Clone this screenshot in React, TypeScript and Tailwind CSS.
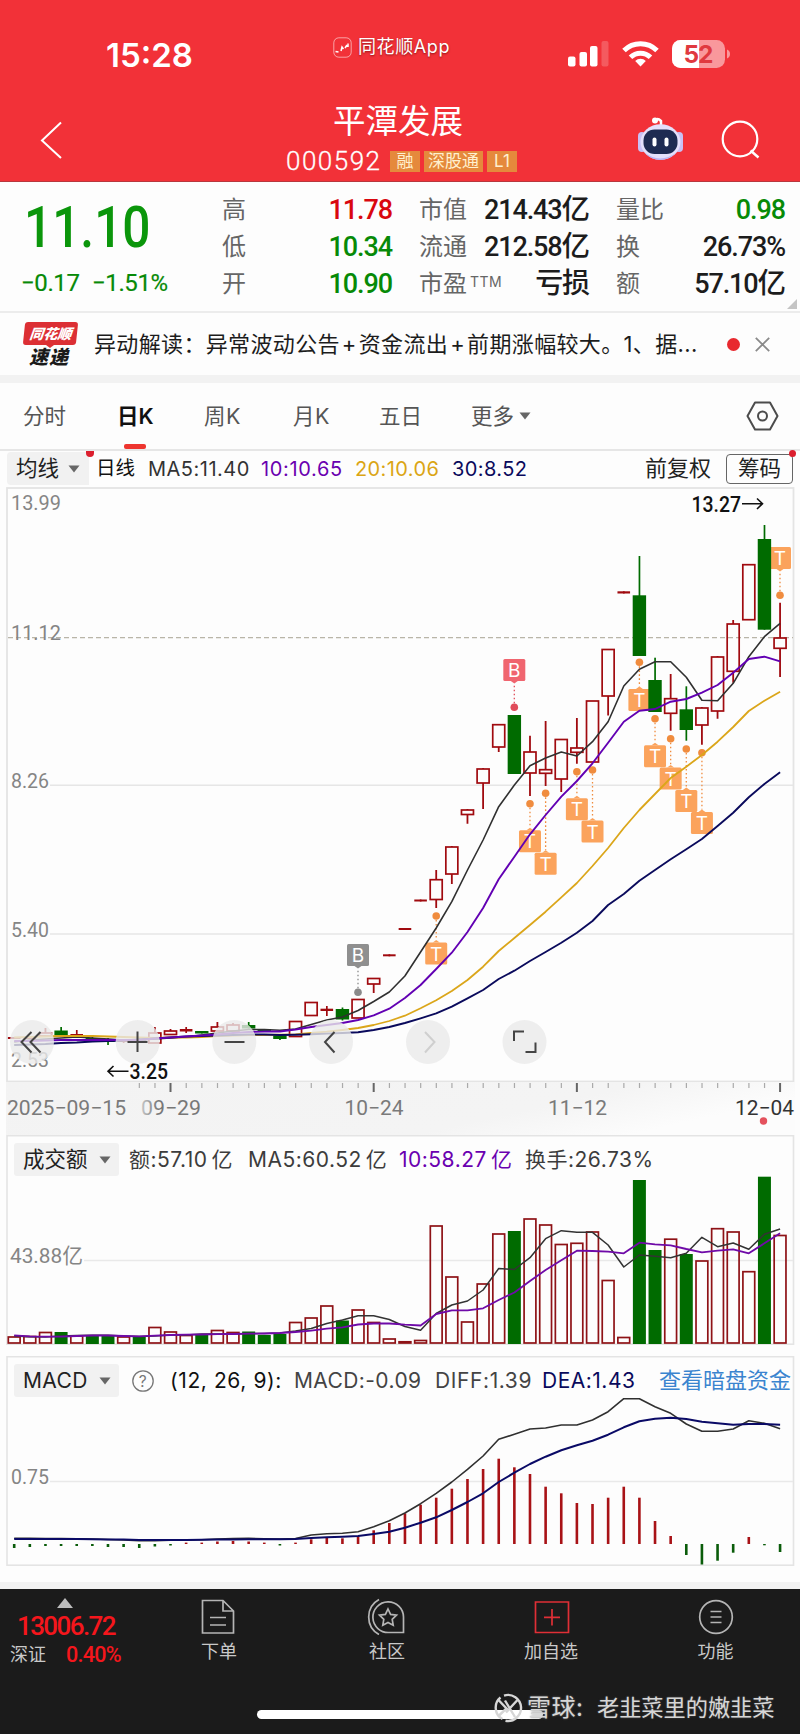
import React from 'react';

const UP = '#a00a0f';
const DOWN = '#006b00';

const colX = (i: number) => 14.2 + 15.63 * i;

type Candle = [number, number, number, number, 'r' | 'g' | 's'];

// high, body top, body bottom, low, kind (r hollow, g falling, s solid red)
const candles: Candle[] = [
  [1037, 1037, 1039, 1039, 's'], [1037, 1037, 1039, 1039, 's'], [1028, 1033, 1036, 1037, 'r'], [1027, 1030.5, 1035.5, 1036, 'g'],
  [1030, 1034, 1036, 1038, 's'], [1037, 1038, 1040, 1042, 'g'], [1038, 1040, 1042, 1045, 'g'], [1039, 1040, 1042, 1043, 's'],
  [1038, 1040, 1043, 1043, 'g'], [1027, 1033, 1043, 1043, 'r'], [1029, 1031, 1034.5, 1034.5, 'r'], [1027, 1029, 1031.5, 1033, 's'],
  [1031, 1031, 1033.5, 1033.5, 'g'], [1022, 1027, 1031, 1031, 'r'], [1023, 1025, 1031, 1031, 'r'], [1022, 1025, 1028.5, 1028.5, 'g'],
  [1029, 1029, 1031.5, 1031.5, 'g'], [1035, 1035, 1039, 1040, 'g'], [1021, 1021.5, 1036.5, 1037, 'r'], [1002, 1002.5, 1015.5, 1016, 'r'],
  [1006, 1008.7, 1011, 1016, 's'], [1007.5, 1009, 1019.5, 1020.5, 'g'], [999, 999.5, 1018, 1018, 'r'], [978, 978.5, 984, 993, 'r'],
  [954.3, 954.3, 956.3, 956.3, 's'], [928, 928, 930, 930, 's'], [899.5, 899.5, 901.5, 901.5, 's'], [870, 879.7, 899.5, 908, 'r'],
  [846, 847, 874, 884, 'r'], [809, 810, 814.5, 823.7, 'r'], [768, 769, 783, 809, 'r'], [724, 724.7, 747, 752, 'r'],
  [715, 715, 774, 774, 'g'], [735.7, 752, 773, 796, 'r'], [721, 769.7, 773.3, 786, 'r'], [739, 739.5, 779, 792, 'r'],
  [718, 748, 752.3, 763.7, 'r'], [701, 701, 762, 762, 'r'], [649, 649.5, 696, 715.5, 'r'], [591.3, 591.3, 593.5, 593.5, 's'],
  [556, 595.3, 656, 656, 'g'], [657.7, 680, 712, 712, 'g'], [674, 698.7, 713.3, 730.7, 'r'], [686.3, 709.3, 730, 740.7, 'g'],
  [707, 708, 725, 744.7, 'r'], [656, 657, 711, 718.7, 'r'], [620, 624, 671.3, 682.7, 'r'], [564, 564.7, 619.7, 620, 'r'],
  [525, 539, 629.7, 629.7, 'g'], [602.7, 638, 648.3, 677, 'r'],
];

const ma5 = [1042, 1040, 1039, 1038, 1037, 1038, 1039, 1040, 1040, 1039, 1038, 1037, 1035, 1033, 1031, 1029.5, 1029.5, 1030.3, 1029, 1024.5, 1020, 1017, 1010.5, 1001.5, 992, 976, 952, 928, 901.7, 870, 840, 806.7, 785, 765.7, 758, 752, 756, 741.7, 721.7, 686, 669.3, 661.7, 661.7, 677.3, 700.3, 700.7, 683.3, 656.7, 636.7, 623.3];
const ma10 = [1041, 1041, 1040.5, 1040, 1040, 1040, 1040, 1040, 1040, 1038.5, 1037.5, 1036.5, 1035.5, 1034.5, 1033, 1032, 1031.5, 1031.5, 1029.5, 1027, 1025, 1023, 1020, 1015.3, 1008.7, 998, 985, 969, 952.7, 932, 908, 879.3, 856.7, 834.3, 815, 796.7, 781, 763.3, 742.7, 721.7, 710.7, 709, 701.7, 699, 692.7, 685, 672.7, 659, 656.7, 661.3];
const ma20 = [1037.5, 1037, 1036.5, 1036, 1036, 1036, 1036.5, 1037, 1037.5, 1038, 1037.5, 1037.5, 1037, 1036, 1035.5, 1035, 1035, 1034.7, 1034.3, 1033, 1031.7, 1030, 1028, 1025, 1021, 1015.7, 1008.3, 1000.3, 991, 980, 966.7, 951, 938, 925, 911.7, 897.3, 883, 866, 848, 828, 810, 794, 778, 766.7, 755, 741.7, 727, 711, 700.7, 691.7];
const ma30 = [1045, 1044.5, 1044, 1043, 1042.5, 1041.5, 1041, 1040.5, 1039.5, 1038.5, 1037.5, 1036.5, 1036, 1035.5, 1035, 1034.5, 1034.5, 1035, 1034.7, 1034.2, 1033.6, 1033, 1032.2, 1030, 1027, 1023, 1018.3, 1013.3, 1006.7, 998.3, 990, 979, 970.7, 961, 952, 942.7, 932.7, 921, 905, 894, 880.7, 870, 859.3, 849.3, 839, 826, 812.7, 797.3, 784, 772.3];

const volTop = [1337, 1336.5, 1332.5, 1332, 1336, 1336, 1336, 1337, 1337, 1327.5, 1332, 1335.5, 1335, 1330.5, 1332.5, 1331.5, 1335, 1334, 1322.5, 1318, 1306, 1320.5, 1310, 1322.5, 1339, 1341.8, 1340.5, 1226, 1277, 1322, 1284, 1234, 1231, 1219, 1225, 1244.5, 1243.3, 1232, 1280.5, 1337.5, 1180, 1250, 1239.2, 1254, 1261, 1228.7, 1232, 1271.7, 1176.7, 1235.5];
const volDown = [3, 5, 6, 8, 12, 15, 16, 17, 21, 32, 40, 41, 43, 48];
const volMa5 = [1336, 1336.7, 1337, 1336, 1335.5, 1335.3, 1335.3, 1336, 1336.5, 1336, 1335, 1335, 1334, 1334, 1334, 1333.5, 1333.5, 1333, 1331, 1328.5, 1323.5, 1320, 1315.7, 1315.7, 1319.5, 1326.5, 1330.3, 1313.5, 1305, 1301, 1290, 1268.5, 1269.5, 1257.7, 1238.7, 1230.7, 1232.3, 1232.3, 1245, 1267, 1255, 1256.3, 1257.7, 1253.3, 1237.3, 1246.7, 1243, 1249.3, 1234.3, 1229];
const volMa10 = [1335.3, 1336.3, 1336.7, 1336.7, 1336, 1335.5, 1335.5, 1336, 1336.3, 1335.7, 1335, 1334.7, 1334.5, 1334.2, 1334, 1333.7, 1333.5, 1333, 1332, 1330.7, 1328.7, 1327.3, 1324.5, 1323.5, 1323.5, 1324.7, 1325.5, 1314, 1310.3, 1310.3, 1308.3, 1300, 1292.5, 1281, 1270, 1260.3, 1250.7, 1251, 1251.7, 1253.3, 1242.7, 1244.3, 1245.3, 1249, 1252.3, 1250.7, 1249.3, 1253.3, 1243.3, 1233.3];

const macdEnd = [1548, 1547, 1546, 1546, 1546, 1546, 1547, 1547, 1548, 1546.5, 1545.5, 1542.6, 1542.6, 1541.5, 1541, 1541.5, 1542.6, 1545.5, 1542.6, 1539.3, 1537.7, 1538.3, 1536, 1530.3, 1523, 1513.3, 1504.7, 1497.7, 1488.7, 1479, 1469, 1458.7, 1467.3, 1474, 1486.7, 1493.3, 1503, 1504, 1497.7, 1486.7, 1497.7, 1521, 1536, 1555, 1564.5, 1560.7, 1552.7, 1537, 1545.3, 1552];
const diff = [1538.3, 1538.3, 1538.5, 1538.5, 1538.7, 1539, 1539.5, 1540, 1540.7, 1540.7, 1540.3, 1540, 1539.7, 1539, 1538.5, 1538.3, 1538.7, 1539, 1538.5, 1535, 1533.7, 1533.3, 1531.7, 1526.7, 1520.7, 1513, 1503.7, 1493.3, 1482, 1469.3, 1456, 1439.3, 1434.3, 1429, 1428, 1425, 1425, 1420, 1411.7, 1398.7, 1398.7, 1406.7, 1413.3, 1424, 1431.3, 1431.3, 1429, 1420.7, 1423.3, 1428.7];
const dea = [1539, 1539, 1539, 1539, 1539, 1539.2, 1539.4, 1539.6, 1540, 1540, 1540, 1540, 1539.8, 1539.6, 1539.4, 1539.2, 1539.2, 1539.2, 1539, 1538, 1537.3, 1536.7, 1536, 1534, 1531.7, 1527.7, 1522.7, 1517.3, 1510, 1502, 1493.3, 1482, 1472.7, 1464, 1456.7, 1450.3, 1445.3, 1440.7, 1434.7, 1427.3, 1421.3, 1418.7, 1417.7, 1419, 1421.7, 1423.3, 1424.7, 1424, 1424, 1424.7];

// column, dot y, label top y
const tradeMarks: [number, number, number][] = [
  [27, 916, 942.5], [33, 803.7, 830.3], [34, 793.3, 852.7], [36, 771.7, 798.3], [37, 770, 820.5],
  [40, 662.3, 689], [41, 718.7, 745.3], [42, 738.7, 767.5], [43, 749, 790], [44, 752.7, 812],
];

function Series({ data, color, width = 1.6 }: { data: number[]; color: string; width?: number }) {
  return (
    <polyline
      points={data.map((y, i) => `${colX(i).toFixed(1)},${y}`).join(' ')}
      fill="none"
      stroke={color}
      strokeWidth={width}
      strokeLinejoin="round"
    />
  );
}

function CandleMark({ c, i }: { c: Candle; i: number }) {
  const [hi, top, bot, lo, kind] = c;
  const x = colX(i);
  if (kind === 'g') {
    return (
      <g fill={DOWN}>
        <rect x={x - 0.8} y={hi} width={1.7} height={lo - hi} />
        <rect x={x - 6.7} y={top} width={13.4} height={bot - top} />
      </g>
    );
  }
  if (kind === 's') {
    return (
      <g fill={UP}>
        <rect x={x - 0.8} y={hi} width={1.7} height={lo - hi} />
        <rect x={x - 6.3} y={top} width={12.6} height={bot - top} />
      </g>
    );
  }
  return (
    <g stroke={UP} fill="none">
      <path d={`M${x} ${hi}V${top}M${x} ${bot}V${lo}`} strokeWidth={1.8} />
      <rect x={x - 6} y={top} width={12} height={bot - top} strokeWidth={1.7} />
    </g>
  );
}

function Marker({ x, dot, top, letter, fill, dotFill }: { x: number; dot: number; top: number; letter: string; fill: string; dotFill: string }) {
  const below = top > dot;
  const tip = below ? top - 2.5 : top + 24.5;
  const edge = below ? top : top + 22;
  return (
    <g>
      <line x1={x} x2={x} y1={dot} y2={tip} stroke={dotFill} strokeWidth={1.3} strokeDasharray="1.6 2.4" />
      <circle cx={x} cy={dot} r={3.8} fill={dotFill} />
      <rect x={x - 11} y={top} width={22} height={22} rx={1.5} fill={fill} />
      <path d={`M${x - 3.5} ${edge}L${x} ${tip}L${x + 3.5} ${edge}Z`} fill={fill} />
      <text x={x} y={top + 18} textAnchor="middle" fontSize={19} fontFamily="Inter" fontWeight={400} fill="#fff">{letter}</text>
    </g>
  );
}

function AxisText({ x, y, len, children, fill = '#858585', weight = 400, size = 21 }: { x: number; y: number; len: number; children: string; fill?: string; weight?: number; size?: number }) {
  return (
    <text x={x} y={y} textLength={len} lengthAdjust="spacingAndGlyphs" fontSize={size} fontWeight={weight} fontFamily="Roboto, 'Noto Sans CJK SC', sans-serif" fill={fill}>
      {children}
    </text>
  );
}

function Caret() {
  return (
    <svg className="h-2 w-3" viewBox="0 0 12 8"><path d="M.5.5h11L6 7.5Z" fill="#666" /></svg>
  );
}

function StatusBar() {
  return (
    <div className="flex h-[86px] pt-[34px]">
      <div className="w-[333px] pl-[106px] pt-px text-[33px] leading-[40px] font-semibold">15:28</div>
      <div className="flex h-[26px] w-[235px] items-center gap-[6px]">
        <svg className="h-[21px] w-[19px]" viewBox="0 0 19 21" fill="none" stroke="#fff">
          <rect x="0.8" y="0.8" width="17.4" height="19.4" rx="5" strokeOpacity=".55" />
          <path d="M2.500 14.500l3 .5M8 14l1-4 1.500 2M12 11l2-3M15 6.500v3.500" strokeWidth="1.500" />
        </svg>
        <span className="text-[18px] leading-[26px] tracking-[0.6px] [text-shadow:0_1px_2px_rgba(80,0,0,.6)]">同花顺App</span>
      </div>
      <svg className="h-[40px] w-[170px]" viewBox="568 34 170 40" fill="#fff">
        <rect x="568" y="56.500" width="7.500" height="10" rx="2" />
        <rect x="579.500" y="52" width="7.500" height="14.500" rx="2" />
        <rect x="590" y="46" width="7.500" height="20.500" rx="2" />
        <rect x="601.500" y="41" width="7" height="25.500" rx="2" opacity=".2" />
        <g fill="none" stroke="#fff" strokeWidth="5">
          <path d="M624 50.500a23.500 23.500 0 0 1 33 0" />
          <path d="M630.500 57.300a14.300 14.300 0 0 1 20 0" />
        </g>
        <path d="M640.500 66.500l-5.300-5.600a7.500 7.500 0 0 1 10.600 0Z" />
        <rect x="672" y="40" width="53" height="28" rx="8.500" opacity=".5" />
        <path d="M699 40h-18.500a8.500 8.500 0 0 0-8.500 8.500v11a8.500 8.500 0 0 0 8.500 8.500h18.500Z" />
        <path d="M727 49.500c4 1.500 4 7.500 0 9Z" opacity=".5" />
        <text x="698.500" y="62.800" textAnchor="middle" fontFamily="Inter" fontWeight="700" fontSize="24.500" fill="#e0393f" textLength="30">52</text>
      </svg>
    </div>
  );
}

function TitleBar() {
  return (
    <div className="flex h-[96px] items-start">
      <svg className="mt-[34px] ml-[38px] h-[40px] w-[28px]" viewBox="38 120 28 40" fill="none" stroke="#fff" strokeWidth="2">
        <path d="M61 122.500L42 140.500L61 158" />
      </svg>
      <div className="ml-[221px] flex w-[232px] flex-col">
        <div className="h-[56px] pl-[46px] pt-[14px] text-[32.500px] leading-[44px]">平潭发展</div>
        <div className="flex items-center pt-[8px]">
          <span className="w-[104px] -ml-px font-[Roboto] text-[26px] leading-[22px] font-light tracking-[1.5px] [-webkit-text-stroke:0.3px_#fff]">000592</span>
          <div className="flex h-[21px] gap-[4px] text-[17px] leading-[20px] text-[#fff0cf]">
            <span className="w-[30px] bg-[#e5893c] text-center">融</span>
            <span className="w-[59px] bg-[#e5893c] text-center">深股通</span>
            <span className="w-[30px] bg-[#e5893c] text-center">L1</span>
          </div>
        </div>
      </div>
      <svg className="mt-[29px] ml-[114px] h-[50px] w-[140px]" viewBox="633 115 140 50" fill="none">
        <path d="M655 121q2-4 6 0v6" stroke="#fff" strokeWidth="2.500" />
        <circle cx="655" cy="120.500" r="3" fill="#fff" />
        <rect x="638" y="132" width="8" height="20" rx="4" fill="#c9c0f5" />
        <rect x="675" y="132" width="8" height="20" rx="4" fill="#c9c0f5" />
        <ellipse cx="660.500" cy="142" rx="20" ry="17.800" fill="#e4e0fb" />
        <path d="M644 152q16 13 33 0-8 8-17 8t-16-8Z" fill="#b9b5f5" />
        <rect x="643.500" y="129.500" width="34" height="24.500" rx="11" fill="#1e2b52" />
        <rect x="652.500" y="137.500" width="4" height="9" rx="2" fill="#fff" />
        <rect x="664.500" y="137.500" width="4" height="9" rx="2" fill="#fff" />
        <circle cx="740" cy="139" r="17.300" stroke="#fff" strokeWidth="2.200" />
        <path d="M750.500 150.500L758.500 157.500" stroke="#fff" strokeWidth="2.500" />
      </svg>
    </div>
  );
}

function QuoteColumn({ className, rows }: { className: string; rows: { label: React.ReactNode; value: React.ReactNode; tone: string }[] }) {
  return (
    <div className={className}>
      {rows.map((r, i) => (
        <div key={i} className="flex h-[37px] items-center justify-between whitespace-nowrap">
          <span className="text-[24px] text-[#666]">{r.label}</span>
          <span className={r.tone}>{r.value}</span>
        </div>
      ))}
    </div>
  );
}

function Yi({ n }: { n: string }) {
  return <>{n}<span className="text-[28.500px] leading-[30px]">亿</span></>;
}

function Quote() {
  const num = "font-['Roboto','Noto_Sans_CJK_SC',sans-serif] text-[27px] leading-[30px] font-medium tracking-[-1.1px] ";
  const red = num + 'text-[#d9070f]';
  const green = num + 'text-[#078a07]';
  const black = num + 'text-[#1c1c1c]';
  return (
    <section className="flex h-[131px] border-b-2 border-[#ececec] pt-[9px]">
      <div className="w-[222px]">
        <div className="h-[73px] pl-[24px]">
          <div className="w-[150px] origin-left scale-x-[0.855] font-[Roboto] text-[58px] leading-[72px] font-medium text-[#0b960b]">11.10</div>
        </div>
        <div className="flex h-[38px] items-center pl-[21px] font-[Roboto] text-[24px] tracking-[-0.4px] text-[#078a07] [-webkit-text-stroke:0.2px_#078a07]">
          <span className="w-[71px]">−0.17</span>
          <span>−1.51%</span>
        </div>
      </div>
      <QuoteColumn className="w-[170px]" rows={[
        { label: '高', value: '11.78', tone: red },
        { label: '低', value: '10.34', tone: green },
        { label: '开', value: '10.90', tone: green },
      ]} />
      <QuoteColumn className="ml-[27px] w-[170px]" rows={[
        { label: '市值', value: <Yi n="214.43" />, tone: black },
        { label: '流通', value: <Yi n="212.58" />, tone: black },
        { label: <>市盈<span className="ml-[3px] inline-block -translate-y-[5px] text-[14px] tracking-[0.5px]">TTM</span></>, value: <span className="text-[28px]">亏损</span>, tone: black },
      ]} />
      <QuoteColumn className="ml-[27px] w-[169px]" rows={[
        { label: '量比', value: '0.98', tone: green },
        { label: '换', value: '26.73%', tone: black },
        { label: '额', value: <Yi n="57.10" />, tone: black },
      ]} />
      <svg className="mt-[108px] ml-[2px] h-[10px] w-[10px]" viewBox="0 0 10 10"><path d="M10 0V10H0Z" fill="#c4c4c4" /></svg>
    </section>
  );
}

function News() {
  return (
    <section className="flex h-[62px] items-center">
      <div className="ml-[24px] flex w-[70px] flex-col italic">
        <div className="flex h-[23px] w-[53px] -skew-x-6 items-center justify-center rounded-[3px] bg-[#dc2f34] text-[14px] font-black text-white">同花顺</div>
        <svg className="ml-[22px] h-[3px] w-[8px]" viewBox="0 0 8 3"><path d="M0 0H8L4 3Z" fill="#dc2f34" /></svg>
        <div className="pl-[5px] text-[19px] leading-[19px] font-black tracking-[1px] text-[#1a1a1a]">速递</div>
      </div>
      <div className="w-[633px] text-[22px] tracking-[0.350px] whitespace-nowrap text-[#1c1c1c]">
        异动解读：异常波动公告<span className="mx-[2px]">+</span>资金流出<span className="mx-[2px]">+</span>前期涨幅较大。1、据...
      </div>
      <div className="h-[13px] w-[13px] rounded-full bg-[#e8292f]" />
      <svg className="ml-[15px] h-[15px] w-[15px]" viewBox="0 0 15 15" stroke="#8a8a8a" strokeWidth="1.800"><path d="M.8.8L14.200 14.200M14.200.8L.8 14.200" /></svg>
    </section>
  );
}

function PeriodTabs() {
  return (
    <nav className="flex h-[68px] items-center border-b-2 border-[#e6e6e6] pl-[23px] text-[21.500px] whitespace-nowrap text-[#555]">
      <span className="w-[94px]">分时</span>
      <div className="relative flex h-full w-[87px] items-center font-semibold text-[#111]">
        日K
        <span className="absolute bottom-0 left-[7px] h-[5px] w-[22px] rounded-[2px] bg-[#ee352f]" />
      </div>
      <span className="w-[89px] tracking-[0.5px]">周K</span>
      <span className="w-[86px] tracking-[0.5px]">月K</span>
      <span className="w-[92px]">五日</span>
      <span className="flex w-[275px] items-center gap-[5px]">更多<Caret /></span>
      <svg className="h-[30px] w-[33px]" viewBox="0 0 33 30" fill="none" stroke="#4c4c4c" strokeWidth="2">
        <path d="M9 1.500H24L31.500 15L24 28.500H9L1.500 15Z" strokeLinejoin="round" />
        <circle cx="16.500" cy="15" r="4.500" />
      </svg>
    </nav>
  );
}

function MaRow() {
  return (
    <div className="flex h-[37px] items-center pl-[7px] text-[20px] whitespace-nowrap">
      <div className="relative flex h-[33px] w-[82px] items-center gap-[9px] rounded-l-[4px] bg-[#f1f1f1] pl-[9px] text-[21.500px] text-[#222]">
        均线<Caret />
        <span className="absolute -top-[1px] -right-[5px] h-[6px] w-[8px] rounded-b-full bg-[#dc1f2e]" />
      </div>
      <span className="ml-[7px] w-[52px] text-[19.500px] text-[#111]">日线</span>
      <span className="w-[113px] tracking-[0.5px] text-[#333]">MA5:11.40</span>
      <span className="w-[94px] tracking-[0.650px] text-[#6a00b0]">10:10.65</span>
      <span className="w-[97px] tracking-[0.4px] text-[#dba514]">20:10.06</span>
      <span className="w-[193px] tracking-[0.4px] text-[#0a0a5c]">30:8.52</span>
      <span className="w-[81px] text-[22px] text-[#222]">前复权</span>
      <div className="relative flex h-[30px] w-[67px] items-center justify-center rounded-[4px] border-[1.500px] border-[#666] text-[21.500px] text-[#222]">
        筹码
        <span className="absolute -top-[5px] -right-[4px] h-[7px] w-[7px] rounded-full bg-[#dc1f2e]" />
      </div>
    </div>
  );
}

const circleButtons = [32, 137.7, 234.3, 331, 428, 524.5];

function KChart() {
  return (
    <svg className="block h-[594px] w-[800px] overflow-visible" viewBox="0 487 800 594">
      <rect x="7" y="488" width="786.500" height="593.500" fill="none" stroke="#e4e4e4" strokeWidth="1.800" />
      <g stroke="#e6e6e6" strokeWidth="1.600">
        <line x1="50" x2="793" y1="785.300" y2="785.300" />
        <line x1="50" x2="793" y1="934" y2="934" />
      </g>
      <line x1="8" x2="793" y1="637.700" y2="637.700" stroke="#b9b5a8" strokeWidth="1.300" strokeDasharray="5 3" />
      <AxisText x={11} y={510} len={50}>13.99</AxisText>
      <AxisText x={11} y={639.500} len={50}>11.12</AxisText>
      <AxisText x={11} y={788} len={38}>8.26</AxisText>
      <AxisText x={11} y={936.500} len={38}>5.40</AxisText>
      <AxisText x={11} y={1066.500} len={38}>2.53</AxisText>

      {tradeMarks.map(([i, dot, top]) => (
        <Marker key={i} x={colX(i)} dot={dot} top={top} letter="T" fill="#fba35c" dotFill="#f08c3e" />
      ))}
      <Marker x={780} dot={595.300} top={547} letter="T" fill="#fba35c" dotFill="#f08c3e" />
      <Marker x={514.300} dot={707.300} top={659} letter="B" fill="#f0656f" dotFill="#e04c5a" />
      <Marker x={358} dot={992.300} top={944} letter="B" fill="#8f8f8f" dotFill="#8a8a8a" />

      {candles.map((c, i) => <CandleMark key={i} c={c} i={i} />)}
      <Series data={ma5} color="#303030" />
      <Series data={ma20} color="#dba61a" width={1.800} />
      <Series data={ma30} color="#0a0a5c" width={1.900} />
      <Series data={ma10} color="#6200b3" width={1.900} />

      <AxisText x={691.500} y={512} len={49.500} fill="#111" weight={500} size={22}>13.27</AxisText>
      <path d="M742 503.700H762.500M757 498.500L762.500 503.700L757 509" fill="none" stroke="#111" strokeWidth="1.600" />
      <path d="M128.500 1071.300H108M113.500 1066L108 1071.300L113.500 1076.500" fill="none" stroke="#111" strokeWidth="1.600" />
      <AxisText x={129.500} y={1078.500} len={38.500} fill="#111" weight={500} size={22}>3.25</AxisText>

      {circleButtons.map((x) => <circle key={x} cx={x} cy={1042} r={22} fill="#eaeaea" fillOpacity={0.8} />)}
      <g fill="none" stroke="#444" strokeWidth="2">
        <path d="M31.500 1032L21.500 1042L31.500 1052.500M40.500 1032L30.500 1042L40.500 1052.500" />
        <path d="M127.500 1042H147.500M137.500 1031.500V1052" />
        <path d="M224.500 1042H244.500" />
        <path d="M334.500 1032L325 1042L334.500 1052.500" />
        <path d="M425 1032L434.500 1042L425 1052.500" stroke="#cfcfcf" />
        <path d="M514 1041V1031.500H524M535.500 1042.500V1052H525.500" />
      </g>
    </svg>
  );
}

function TimeAxis() {
  const ticks = Array.from({ length: 42 }, (_, k) => k + 8);
  return (
    <svg className="block h-[54px] w-[800px]" viewBox="0 1081 800 54">
      <defs>
        <linearGradient id="axisbg" x1="0" x2="1" y1="0" y2="0.3">
          <stop offset="0" stopColor="#f3f3f3" />
          <stop offset="0.750" stopColor="#f4f4f4" />
          <stop offset="1" stopColor="#fcfcfc" />
        </linearGradient>
        <linearGradient id="fadeDigit" gradientUnits="userSpaceOnUse" x1="141" x2="158" y1="0" y2="0">
          <stop offset="0" stopColor="#c8c8c8" />
          <stop offset="1" stopColor="#777" />
        </linearGradient>
      </defs>
      <rect x="6" y="1082" width="789" height="53" fill="url(#axisbg)" />
      {ticks.map((i) => {
        const major = i === 10 || i === 23 || i === 36 || i === 49;
        return <rect key={i} x={colX(i) - (major ? 1 : 0.5)} y={1083} width={major ? 2 : 1.2} height={major ? 9 : 5} fill={major ? '#666' : '#aaa'} />;
      })}
      <AxisText x={7} y={1115} len={119} fill="#7a7a7a">2025−09−15</AxisText>
      <AxisText x={141} y={1115} len={60} fill="url(#fadeDigit)">09−29</AxisText>
      <AxisText x={344.500} y={1115} len={59} fill="#7a7a7a">10−24</AxisText>
      <AxisText x={548} y={1115} len={59} fill="#7a7a7a">11−12</AxisText>
      <AxisText x={735} y={1115} len={59} fill="#333">12−04</AxisText>
      <circle cx="763.500" cy="1121" r="3.700" fill="#e4525d" />
    </svg>
  );
}

function Chip({ children }: { children: React.ReactNode }) {
  return (
    <div className="flex h-[33px] w-[105px] items-center justify-between rounded-[3px] bg-[#f1f1f1] pr-[8px] pl-[9px] text-[#222]">
      {children}<Caret />
    </div>
  );
}

function VolumePanel() {
  return (
    <section className="relative h-[210px]">
      <div className="relative z-10 flex h-[42px] items-center pt-[7px] pl-[14px] text-[21px] tracking-[0.5px] whitespace-nowrap text-[#3c3c3c]">
        <Chip><span className="text-[21.500px] tracking-normal">成交额</span></Chip>
        <span className="ml-[10px] w-[119px]">额:57.10<span className="ml-[4px]">亿</span></span>
        <span className="w-[151px]">MA5:60.52<span className="ml-[4px]">亿</span></span>
        <span className="w-[126px] text-[#6a00b0]">10:58.27<span className="ml-[4px]">亿</span></span>
        <span>换手:26.73%</span>
      </div>
      <svg className="absolute inset-0 h-[210px] w-[800px]" viewBox="0 1135 800 210">
        <rect x="7" y="1135.700" width="786.500" height="208.500" fill="none" stroke="#e4e4e4" strokeWidth="1.600" />
        <line x1="84" x2="793" y1="1260.500" y2="1260.500" stroke="#e9e9e9" strokeWidth="1.600" />
        <AxisText x={10} y={1263} len={73}>43.88亿</AxisText>
        {volTop.map((y, i) =>
          volDown.includes(i) ? (
            <rect key={i} x={colX(i) - 6.500} y={y} width={13} height={1344 - y} fill={DOWN} />
          ) : (
            <rect key={i} x={colX(i) - 5.900} y={y} width={11.800} height={1343 - y} fill="none" stroke="#8e1216" strokeWidth={1.700} />
          ),
        )}
        <Series data={volMa5} color="#333" width={1.500} />
        <Series data={volMa10} color="#6f0aa8" width={1.800} />
      </svg>
    </section>
  );
}

function MacdPanel() {
  return (
    <section className="relative mt-[11px] h-[210px]">
      <div className="relative z-10 flex h-[42px] items-center pt-[7px] pl-[14px] text-[21px] tracking-[0.4px] whitespace-nowrap text-[#444]">
        <Chip>MACD</Chip>
        <svg className="ml-[13px] h-[22px] w-[22px]" viewBox="0 0 22 22">
          <circle cx="11" cy="11" r="10.200" fill="none" stroke="#777" strokeWidth="1.300" />
          <text x="11" y="16.500" textAnchor="middle" fontSize="15.500" fontFamily="Inter" fill="#777">?</text>
        </svg>
        <span className="ml-[16px] w-[124px] tracking-[0.6px] text-[#111]">(12, 26, 9):</span>
        <span className="w-[141px]">MACD:-0.09</span>
        <span className="w-[107px] tracking-[0.6px]">DIFF:1.39</span>
        <span className="w-[117px] tracking-[0.5px] text-[#0a0a5c]">DEA:1.43</span>
        <span className="text-[22px] tracking-normal text-[#3a84cf]">查看暗盘资金</span>
      </div>
      <svg className="absolute inset-0 h-[210px] w-[800px]" viewBox="0 1356 800 210">
        <rect x="7" y="1356.700" width="786.500" height="208.500" fill="none" stroke="#e4e4e4" strokeWidth="1.600" />
        <line x1="50" x2="793" y1="1481.500" y2="1481.500" stroke="#e9e9e9" strokeWidth="1.600" />
        <AxisText x={11} y={1484} len={38}>0.75</AxisText>
        {macdEnd.map((y, i) => (
          <rect key={i} x={colX(i) - 1.300} y={Math.min(y, 1544)} width={2.600} height={Math.abs(1544 - y)} fill={y > 1544 ? '#0a5c0a' : '#a81216'} />
        ))}
        <Series data={diff} color="#303030" />
        <Series data={dea} color="#0a0a66" width={2} />
      </svg>
    </section>
  );
}

function NavItem({ label, tone = '#b5b5b5', className, children }: { label: string; tone?: string; className: string; children: React.ReactNode }) {
  return (
    <div className={className}>
      <svg className="h-[38px] w-[40px]" viewBox="0 0 40 38" fill="none" stroke={tone} strokeWidth="1.700">{children}</svg>
      <span className="mt-[4px] text-[18px] leading-[26px]">{label}</span>
    </div>
  );
}

function BottomBar() {
  return (
    <footer className="relative flex h-[145px] bg-[#1b1b1b] text-[#c9c9c9]">
      <div className="w-[135px] pl-[10px]">
        <svg className="mt-[9px] ml-[47px] h-[10px] w-[16px]" viewBox="0 0 16 10"><path d="M8 0L16 10H0Z" fill="#bdbdbd" /></svg>
        <div className="mt-[4px] pl-[7px] font-[Roboto] text-[26px] leading-[28px] font-medium tracking-[-1.600px] text-[#f5161c]">13006.72</div>
        <div className="mt-[2px] flex items-center text-[18px] leading-[26px]">
          <span className="w-[56px]">深证</span>
          <span className="font-[Roboto] text-[21.500px] font-medium tracking-[-0.700px] text-[#f5161c]">0.40%</span>
        </div>
      </div>
      <NavItem label="下单" className="flex w-[168px] flex-col items-center pt-[8px]">
        <path d="M3.500 3.500H24L34.500 14V36H3.500ZM24 3.500V14H34.500M11 20.500H27M11 28H27" />
      </NavItem>
      <NavItem label="社区" className="flex w-[168px] flex-col items-center pt-[8px]">
        <path d="M12 2.500A20 20 0 0 0 12 37.500" />
        <path d="M36.500 35.500H22A15.300 15.300 0 1 1 36.500 20Z" />
        <path d="M21 12l2.600 5.400 5.900.8-4.300 4.100 1 5.900-5.200-2.800-5.200 2.800 1-5.900-4.300-4.100 5.900-.8Z" />
      </NavItem>
      <NavItem label="加自选" tone="#e02f36" className="flex w-[160px] flex-col items-center pt-[8px]">
        <path d="M4.500 5H37.500V35.500H4.500ZM13 20.300H29M21 12V28.500" />
      </NavItem>
      <NavItem label="功能" className="flex w-[169px] flex-col items-center pt-[8px]">
        <circle cx="20" cy="20" r="16.300" />
        <path d="M14.500 14.500H25.500M14.500 20H25.500M14.500 25.500H25.500" />
      </NavItem>
      <div className="absolute top-[121px] left-[257px] h-[9px] w-[286px] rounded-full bg-white" />
      <div className="absolute top-[103px] left-[493px] flex items-center whitespace-nowrap text-[#d6d6d6]">
        <svg className="h-[30px] w-[30px]" viewBox="0 0 30 30" fill="none" stroke="#d6d6d6" strokeWidth="2.400">
          <path d="M9.500 26A13 13 0 0 1 7.500 4.500M11 2.600A13 13 0 1 1 12.500 27.700" />
          <path d="M5.500 7L13.500 15.500L5.500 23M12 7.500L22 24M24.500 7L13 19.500" />
        </svg>
        <span className="ml-[4px] w-[70px] text-[24px] leading-[32px] tracking-[0.500px] [text-shadow:0_0_2px_#777]">雪球:</span>
        <span className="text-[22.200px] leading-[32px] [text-shadow:0_0_2px_#555]">老韭菜里的嫩韭菜</span>
      </div>
    </footer>
  );
}

export default function App() {
  return (
    <div className="h-[1734px] w-[800px] overflow-hidden bg-[#fdfdfd] font-['Inter','Noto_Sans_CJK_SC',sans-serif]">
      <header className="h-[182px] border-b border-[#b8373d] bg-[#f23138] text-white">
        <StatusBar />
        <TitleBar />
      </header>
      <Quote />
      <News />
      <div className="h-[8px] bg-[#f2f2f2]" />
      <PeriodTabs />
      <div className="-mt-px"><MaRow /></div>
      <KChart />
      <TimeAxis />
      <VolumePanel />
      <MacdPanel />
      <div className="mt-[16px] h-[7px] bg-[#f2f2f2]" />
      <BottomBar />
    </div>
  );
}
